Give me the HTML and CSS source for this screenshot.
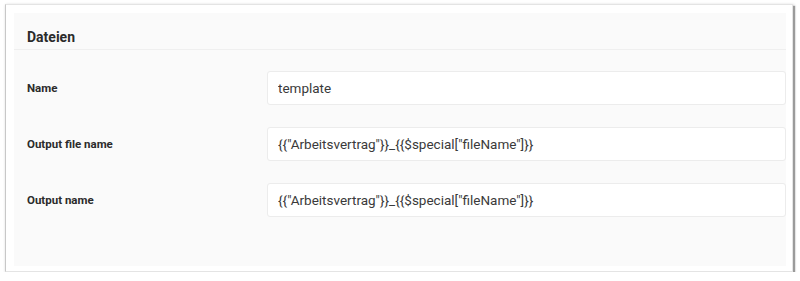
FILE: index.html
```html
<!DOCTYPE html>
<html>
    <head>
        <link rel="stylesheet" href="styles.css">
        <title>Dateien</title>
    </head>
    <body>
        <div class="card">
            <div class="panel">
                <h2 class="title">Dateien</h2>
                <form class="fields">
                    <div class="row">
                        <label for="name">Name</label>
                        <input type="text" id="name" value="template">
                    </div>
                    <div class="row">
                        <label for="outfile">Output file name</label>
                        <input type="text" id="outfile" value='{{"Arbeitsvertrag"}}_{{$special["fileName"]}}'>
                    </div>
                    <div class="row">
                        <label for="outname">Output name</label>
                        <input type="text" id="outname" value='{{"Arbeitsvertrag"}}_{{$special["fileName"]}}'>
                    </div>
                </form>
            </div>
        </div>
    </body>
</html>
```

FILE: styles.css
```css
body {
    margin: 0;
    background-color: #ffffff;
    font-family: Roboto, "Liberation Sans", sans-serif;
}
.card {
    margin: 4px 0 0 5px;
    width: 788px;
    height: 268px;
    background: #ffffff;
    border: 1px solid #e4e4e4;
    border-left-color: #c8c8c8;
    box-shadow: 2px 2px 1px #9a9a9a, 1px 1px 3px rgba(0, 0, 0, 0.25);
    padding: 8px 6px 5px 8px;
    box-sizing: border-box;
}
.panel {
    background: #fafafa;
    height: 100%;
}
.title {
    margin: 0;
    height: 37px;
    box-sizing: border-box;
    padding: 13px 13px 0;
    line-height: 22px;
    font-size: 14px;
    font-weight: bold;
    color: #2b2b2b;
    border-bottom: 1px solid #efefef;
}
.fields {
    padding-top: 21px;
}
.row {
    display: flex;
    align-items: center;
    margin-bottom: 22px;
}
label {
    width: 253px;
    box-sizing: border-box;
    padding-left: 13px;
    font-size: 11.5px;
    font-weight: bold;
    color: #2b2b2b;
}
input {
    flex: 1;
    height: 34px;
    box-sizing: border-box;
    border: 1px solid #ececec;
    border-radius: 3px;
    background: #ffffff;
    padding: 0 10px;
    font-family: Roboto, "Liberation Sans", sans-serif;
    font-size: 13.5px;
    color: #3a3a3a;
    outline: none;
}
```
